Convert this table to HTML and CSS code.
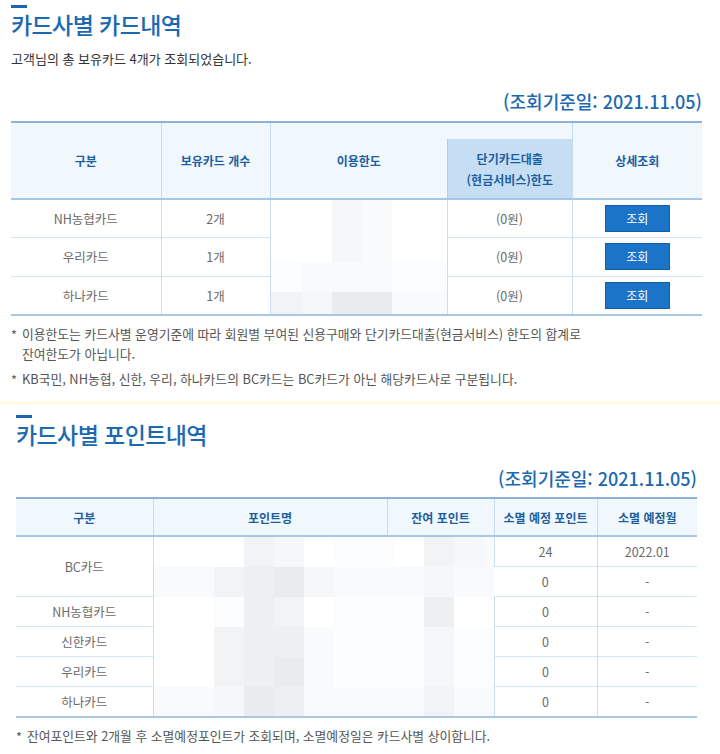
FILE: index.html
```html
<!DOCTYPE html>
<html lang="ko">
<head>
<meta charset="utf-8">
<title>카드사별 카드내역</title>
<link rel="stylesheet" href="styles.css">
</head>
<body>
<section class="sec sec1">
  <div class="bar"></div>
  <h1 class="title">카드사별 카드내역</h1>
  <p class="lead">고객님의 총 보유카드 4개가 조회되었습니다.</p>
  <div class="date">(조회기준일: 2021.11.05)</div>
  <table class="tbl t1">
    <colgroup><col class="c150"><col class="c109"><col class="c177"><col class="c125"><col class="c130"></colgroup>
    <thead>
      <tr>
        <th>구분</th>
        <th>보유카드 개수</th>
        <th class="nor">이용한도</th>
        <th class="loan"><div class="loan-in">단기카드대출<br>(현금서비스)한도</div></th>
        <th>상세조회</th>
      </tr>
    </thead>
    <tbody>
      <tr>
        <td>NH농협카드</td>
        <td>2개</td>
        <td class="mos-cell" rowspan="3">
          <div class="mosaic m1">
            <i class="s0"></i><i class="s0"></i><i class="s3"></i><i class="s2"></i><i class="s0"></i><i class="s0"></i>
            <i class="s0"></i><i class="s0"></i><i class="s3"></i><i class="s2"></i><i class="s0"></i><i class="s0"></i>
            <i class="s1"></i><i class="s2"></i><i class="s2"></i><i class="s2"></i><i class="s1"></i><i class="s1"></i>
            <i class="s4"></i><i class="s3"></i><i class="s6"></i><i class="s6"></i><i class="s2"></i><i class="s2"></i>
          </div>
        </td>
        <td>(0원)</td>
        <td><button class="btn">조회</button></td>
      </tr>
      <tr>
        <td>우리카드</td>
        <td>1개</td>
        <td>(0원)</td>
        <td><button class="btn">조회</button></td>
      </tr>
      <tr>
        <td>하나카드</td>
        <td>1개</td>
        <td>(0원)</td>
        <td><button class="btn">조회</button></td>
      </tr>
    </tbody>
  </table>
  <ul class="notes n1">
    <li>이용한도는 카드사별 운영기준에 따라 회원별 부여된 신용구매와 단기카드대출(현금서비스) 한도의 합계로 잔여한도가 아닙니다.</li>
    <li>KB국민, NH농협, 신한, 우리, 하나카드의 BC카드는 BC카드가 아닌 해당카드사로 구분됩니다.</li>
  </ul>
</section>
<div class="sep"></div>
<section class="sec sec2">
  <div class="bar"></div>
  <h1 class="title">카드사별 포인트내역</h1>
  <div class="date d2">(조회기준일: 2021.11.05)</div>
  <table class="tbl t2">
    <colgroup><col class="c137"><col class="c234"><col class="c107"><col class="c103"><col class="c100"></colgroup>
    <thead>
      <tr>
        <th>구분</th>
        <th>포인트명</th>
        <th>잔여 포인트</th>
        <th>소멸 예정 포인트</th>
        <th>소멸 예정월</th>
      </tr>
    </thead>
    <tbody>
      <tr>
        <td rowspan="2">BC카드</td>
        <td class="mos-cell" colspan="2" rowspan="6">
          <div class="mosaic m2">
            <i class="s0"></i><i class="s0"></i><i class="s0"></i><i class="s4"></i><i class="s3"></i><i class="s0"></i><i class="s1"></i><i class="s1"></i><i class="s0"></i><i class="s4"></i><i class="s3"></i><i class="s2"></i>
            <i class="s2"></i><i class="s2"></i><i class="s4"></i><i class="s5"></i><i class="s6"></i><i class="s3"></i><i class="s2"></i><i class="s2"></i><i class="s2"></i><i class="s3"></i><i class="s2"></i><i class="s2"></i>
            <i class="s0"></i><i class="s0"></i><i class="s1"></i><i class="s5"></i><i class="s4"></i><i class="s0"></i><i class="s1"></i><i class="s1"></i><i class="s1"></i><i class="s5"></i><i class="s0"></i><i class="s0"></i>
            <i class="s0"></i><i class="s0"></i><i class="s4"></i><i class="s5"></i><i class="s5"></i><i class="s2"></i><i class="s1"></i><i class="s1"></i><i class="s1"></i><i class="s3"></i><i class="s1"></i><i class="s1"></i>
            <i class="s0"></i><i class="s0"></i><i class="s4"></i><i class="s5"></i><i class="s6"></i><i class="s2"></i><i class="s1"></i><i class="s1"></i><i class="s1"></i><i class="s3"></i><i class="s1"></i><i class="s1"></i>
            <i class="s2"></i><i class="s2"></i><i class="s3"></i><i class="s6"></i><i class="s5"></i><i class="s2"></i><i class="s2"></i><i class="s2"></i><i class="s2"></i><i class="s4"></i><i class="s2"></i><i class="s2"></i>
          </div>
        </td>
        <td>24</td>
        <td>2022.01</td>
      </tr>
      <tr><td>0</td><td>-</td></tr>
      <tr><td>NH농협카드</td><td>0</td><td>-</td></tr>
      <tr><td>신한카드</td><td>0</td><td>-</td></tr>
      <tr><td>우리카드</td><td>0</td><td>-</td></tr>
      <tr><td>하나카드</td><td>0</td><td>-</td></tr>
    </tbody>
  </table>
  <ul class="notes n2">
    <li>잔여포인트와 2개월 후 소멸예정포인트가 조회되며, 소멸예정일은 카드사별 상이합니다.</li>
  </ul>
</section>
</body>
</html>
```
FILE: styles.css
```css
* { box-sizing: border-box; }
body {
  margin: 0;
  background: #fff;
  font-family: "Noto Sans CJK KR", "Noto Sans", sans-serif;
  color: #555;
}
.sec1 { padding: 5px 18px 0 11px; }
.sec2 { padding: 10px 23px 0 16px; }
.bar { width: 16px; height: 3px; background: #1a67ad; }
.title {
  margin: 2px 0 0;
  font-size: 23px;
  line-height: 28px;
  font-weight: 500;
  letter-spacing: -0.6px;
  color: #1b69b1;
}
.sec2 .title { margin-top: 2px; }
.lead {
  margin: 12px 0 0;
  font-size: 13px;
  line-height: 18px;
  color: #333;
}
.date {
  margin-top: 21px;
  text-align: right;
  font-size: 18px;
  line-height: 24px;
  font-weight: 500;
  color: #1b69b1;
}
.date.d2 { margin-top: 18px; }

.tbl {
  width: 100%;
  table-layout: fixed;
  border-collapse: collapse;
  margin-top: 8px;
  border-top: 2px solid #8cb3d7;
  border-bottom: 2px solid #a7c7e4;
}
.t2 { margin-top: 7px; }
.c150 { width: 150px; } .c109 { width: 109px; } .c177 { width: 177px; } .c125 { width: 125px; } .c130 { width: 130px; }
.c137 { width: 137px; } .c234 { width: 234px; } .c107 { width: 107px; } .c103 { width: 103px; } .c100 { width: 100px; }

.tbl th {
  background: #f0f7fd;
  color: #1d5f9e;
  font-size: 12px;
  font-weight: 700;
  text-align: center;
  border-left: 1px solid #c6dcf0;
  border-bottom: 2px solid #a7c7e4;
  padding: 0;
}
.tbl th:first-child, .tbl td:first-child { border-left: none; }
.t1 th { height: 77px; }
.t2 th { height: 38px; }
.t1 th.nor { border-right: none; }
.t1 th.loan { border-left: none; vertical-align: bottom; }
.loan-in {
  height: 59px;
  background: #c6def4;
  border-left: 1px dotted #9dbfdf;
  display: flex;
  align-items: center;
  justify-content: center;
  line-height: 21px;
}
.tbl td {
  text-align: center;
  font-size: 12.5px;
  color: #6a6a6a;
  border-left: 1px solid #c9def1;
  border-top: 1px solid #d4e5f4;
  padding: 0;
}
.t1 td { height: 38px; }
.t2 td { height: 30px; }
.tbl td.mos-cell { padding: 0; vertical-align: top; }
.mosaic { display: grid; }
.mosaic i { display: block; }
.m1 { grid-template-columns: 31px 30px 30px 30px 30px 1fr; grid-template-rows: 31px 31px 30px 22px; }
.m2 { grid-template-columns: repeat(11, 30px) 1fr; grid-template-rows: 30px 30px 30px 30px 30px 29px; }
.s0 { background: #fff; }
.s1 { background: #fcfdfe; }
.s2 { background: #f9fafc; }
.s3 { background: #f6f7f8; }
.s4 { background: #f2f3f4; }
.s5 { background: #eeeff0; }
.s6 { background: #eaebec; }

.btn {
  width: 65px;
  height: 27px;
  border: 1px solid #1060a9;
  background: #1b74c8;
  color: #fff;
  font-family: inherit;
  font-size: 12px;
  padding: 0;
  vertical-align: middle;
}

.notes {
  list-style: none;
  margin: 0;
  padding: 0;
  font-size: 12.8px;
  color: #555;
  word-break: keep-all;
}
.notes li {
  position: relative;
  padding-left: 11px;
  line-height: 20px;
}
.notes li::before {
  content: "*";
  position: absolute;
  left: 0;
  top: 1px;
}
.n1 { margin-top: 8px; width: 592px; }
.n1 li + li { margin-top: 5px; }
.n2 { margin-top: 8px; }
.sep {
  margin-top: 12px;
  height: 4px;
  background: #fffbe4;
}
```
